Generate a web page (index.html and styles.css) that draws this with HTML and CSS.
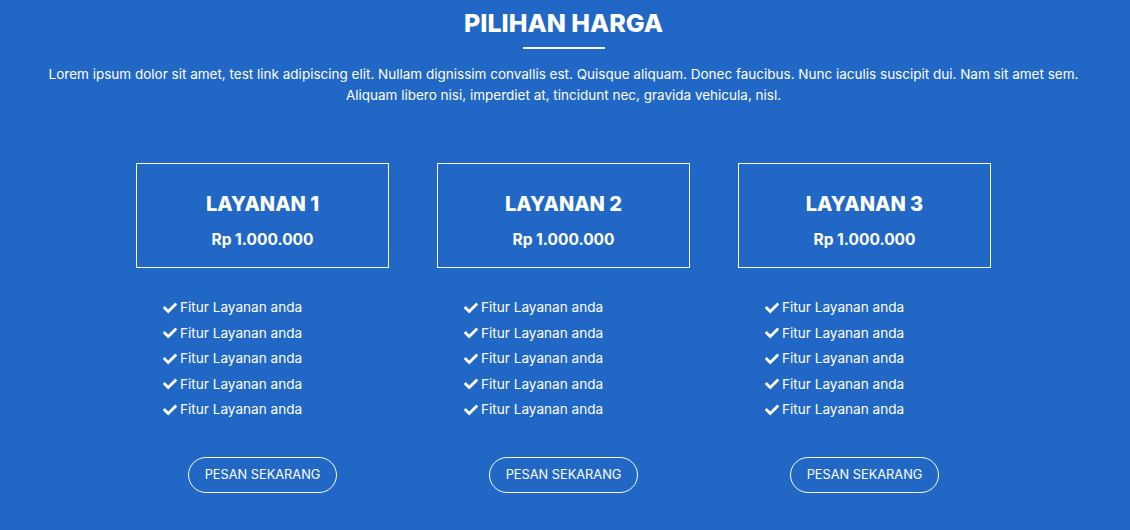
FILE: index.html
```html
<!DOCTYPE html>
<html lang="id">
<head>
<meta charset="utf-8">
<title>Pilihan Harga</title>
<link rel="stylesheet" href="styles.css">
</head>
<body>
<section class="pricing">
  <h2 class="section-title">PILIHAN HARGA</h2>
  <div class="title-line"></div>
  <p class="intro">Lorem ipsum dolor sit amet, test link adipiscing elit. Nullam dignissim convallis est. Quisque aliquam. Donec faucibus. Nunc iaculis suscipit dui. Nam sit amet sem.<br>Aliquam libero nisi, imperdiet at, tincidunt nec, gravida vehicula, nisl.</p>
  <div class="plans">
    <div class="plan">
      <div class="plan-box"><h3>LAYANAN 1</h3><div class="price">Rp 1.000.000</div></div>
      <ul class="features">
        <li><svg class="check" viewBox="0 0 512 512"><path d="M173.9 439.4l-166.4-166.4c-10-10-10-26.2 0-36.2l36.2-36.2c10-10 26.2-10 36.2 0L192 312.7 432.1 72.6c10-10 26.2-10 36.2 0l36.2 36.2c10 10 10 26.2 0 36.2l-294.4 294.4c-10 10-26.2 10-36.2 0z"/></svg>Fitur Layanan anda</li>
        <li><svg class="check" viewBox="0 0 512 512"><path d="M173.9 439.4l-166.4-166.4c-10-10-10-26.2 0-36.2l36.2-36.2c10-10 26.2-10 36.2 0L192 312.7 432.1 72.6c10-10 26.2-10 36.2 0l36.2 36.2c10 10 10 26.2 0 36.2l-294.4 294.4c-10 10-26.2 10-36.2 0z"/></svg>Fitur Layanan anda</li>
        <li><svg class="check" viewBox="0 0 512 512"><path d="M173.9 439.4l-166.4-166.4c-10-10-10-26.2 0-36.2l36.2-36.2c10-10 26.2-10 36.2 0L192 312.7 432.1 72.6c10-10 26.2-10 36.2 0l36.2 36.2c10 10 10 26.2 0 36.2l-294.4 294.4c-10 10-26.2 10-36.2 0z"/></svg>Fitur Layanan anda</li>
        <li><svg class="check" viewBox="0 0 512 512"><path d="M173.9 439.4l-166.4-166.4c-10-10-10-26.2 0-36.2l36.2-36.2c10-10 26.2-10 36.2 0L192 312.7 432.1 72.6c10-10 26.2-10 36.2 0l36.2 36.2c10 10 10 26.2 0 36.2l-294.4 294.4c-10 10-26.2 10-36.2 0z"/></svg>Fitur Layanan anda</li>
        <li><svg class="check" viewBox="0 0 512 512"><path d="M173.9 439.4l-166.4-166.4c-10-10-10-26.2 0-36.2l36.2-36.2c10-10 26.2-10 36.2 0L192 312.7 432.1 72.6c10-10 26.2-10 36.2 0l36.2 36.2c10 10 10 26.2 0 36.2l-294.4 294.4c-10 10-26.2 10-36.2 0z"/></svg>Fitur Layanan anda</li>
      </ul>
      <a class="btn" href="#">PESAN SEKARANG</a>
    </div>
    <div class="plan">
      <div class="plan-box"><h3>LAYANAN 2</h3><div class="price">Rp 1.000.000</div></div>
      <ul class="features">
        <li><svg class="check" viewBox="0 0 512 512"><path d="M173.9 439.4l-166.4-166.4c-10-10-10-26.2 0-36.2l36.2-36.2c10-10 26.2-10 36.2 0L192 312.7 432.1 72.6c10-10 26.2-10 36.2 0l36.2 36.2c10 10 10 26.2 0 36.2l-294.4 294.4c-10 10-26.2 10-36.2 0z"/></svg>Fitur Layanan anda</li>
        <li><svg class="check" viewBox="0 0 512 512"><path d="M173.9 439.4l-166.4-166.4c-10-10-10-26.2 0-36.2l36.2-36.2c10-10 26.2-10 36.2 0L192 312.7 432.1 72.6c10-10 26.2-10 36.2 0l36.2 36.2c10 10 10 26.2 0 36.2l-294.4 294.4c-10 10-26.2 10-36.2 0z"/></svg>Fitur Layanan anda</li>
        <li><svg class="check" viewBox="0 0 512 512"><path d="M173.9 439.4l-166.4-166.4c-10-10-10-26.2 0-36.2l36.2-36.2c10-10 26.2-10 36.2 0L192 312.7 432.1 72.6c10-10 26.2-10 36.2 0l36.2 36.2c10 10 10 26.2 0 36.2l-294.4 294.4c-10 10-26.2 10-36.2 0z"/></svg>Fitur Layanan anda</li>
        <li><svg class="check" viewBox="0 0 512 512"><path d="M173.9 439.4l-166.4-166.4c-10-10-10-26.2 0-36.2l36.2-36.2c10-10 26.2-10 36.2 0L192 312.7 432.1 72.6c10-10 26.2-10 36.2 0l36.2 36.2c10 10 10 26.2 0 36.2l-294.4 294.4c-10 10-26.2 10-36.2 0z"/></svg>Fitur Layanan anda</li>
        <li><svg class="check" viewBox="0 0 512 512"><path d="M173.9 439.4l-166.4-166.4c-10-10-10-26.2 0-36.2l36.2-36.2c10-10 26.2-10 36.2 0L192 312.7 432.1 72.6c10-10 26.2-10 36.2 0l36.2 36.2c10 10 10 26.2 0 36.2l-294.4 294.4c-10 10-26.2 10-36.2 0z"/></svg>Fitur Layanan anda</li>
      </ul>
      <a class="btn" href="#">PESAN SEKARANG</a>
    </div>
    <div class="plan">
      <div class="plan-box"><h3>LAYANAN 3</h3><div class="price">Rp 1.000.000</div></div>
      <ul class="features">
        <li><svg class="check" viewBox="0 0 512 512"><path d="M173.9 439.4l-166.4-166.4c-10-10-10-26.2 0-36.2l36.2-36.2c10-10 26.2-10 36.2 0L192 312.7 432.1 72.6c10-10 26.2-10 36.2 0l36.2 36.2c10 10 10 26.2 0 36.2l-294.4 294.4c-10 10-26.2 10-36.2 0z"/></svg>Fitur Layanan anda</li>
        <li><svg class="check" viewBox="0 0 512 512"><path d="M173.9 439.4l-166.4-166.4c-10-10-10-26.2 0-36.2l36.2-36.2c10-10 26.2-10 36.2 0L192 312.7 432.1 72.6c10-10 26.2-10 36.2 0l36.2 36.2c10 10 10 26.2 0 36.2l-294.4 294.4c-10 10-26.2 10-36.2 0z"/></svg>Fitur Layanan anda</li>
        <li><svg class="check" viewBox="0 0 512 512"><path d="M173.9 439.4l-166.4-166.4c-10-10-10-26.2 0-36.2l36.2-36.2c10-10 26.2-10 36.2 0L192 312.7 432.1 72.6c10-10 26.2-10 36.2 0l36.2 36.2c10 10 10 26.2 0 36.2l-294.4 294.4c-10 10-26.2 10-36.2 0z"/></svg>Fitur Layanan anda</li>
        <li><svg class="check" viewBox="0 0 512 512"><path d="M173.9 439.4l-166.4-166.4c-10-10-10-26.2 0-36.2l36.2-36.2c10-10 26.2-10 36.2 0L192 312.7 432.1 72.6c10-10 26.2-10 36.2 0l36.2 36.2c10 10 10 26.2 0 36.2l-294.4 294.4c-10 10-26.2 10-36.2 0z"/></svg>Fitur Layanan anda</li>
        <li><svg class="check" viewBox="0 0 512 512"><path d="M173.9 439.4l-166.4-166.4c-10-10-10-26.2 0-36.2l36.2-36.2c10-10 26.2-10 36.2 0L192 312.7 432.1 72.6c10-10 26.2-10 36.2 0l36.2 36.2c10 10 10 26.2 0 36.2l-294.4 294.4c-10 10-26.2 10-36.2 0z"/></svg>Fitur Layanan anda</li>
      </ul>
      <a class="btn" href="#">PESAN SEKARANG</a>
    </div>
  </div>
</section>
</body>
</html>
```
FILE: styles.css
```css
html, body {
  margin: 0;
  padding: 0;
  background: #2167c6;
}
body {
  font-family: "Inter", "Noto Sans", sans-serif;
  color: #fff;
  width: 1130px;
  height: 530px;
  overflow: hidden;
}
.pricing {
  display: flex;
  flex-direction: column;
  align-items: center;
  padding: 7px 3px 0 0;
}
.section-title {
  margin: 0;
  font-size: 25px;
  font-weight: 800;
  line-height: 32px;
}
.title-line {
  width: 82px;
  height: 2px;
  background: #fff;
  margin-top: 8px;
}
.intro {
  margin: 15px 0 0;
  font-size: 13.5px;
  line-height: 21px;
  text-align: center;
  width: 1100px;
}
.plans {
  display: grid;
  grid-template-columns: repeat(3, 301px);
  margin-top: 57px;
}
.plan {
  display: flex;
  flex-direction: column;
  align-items: center;
}
.plan-box {
  width: 251px;
  height: 103px;
  border: 1px solid #fff;
  display: flex;
  flex-direction: column;
  align-items: center;
}
.plan-box h3 {
  margin: 28px 0 0;
  font-size: 20px;
  font-weight: 800;
  line-height: 24px;
}
.price {
  margin-top: 14px;
  font-size: 15.5px;
  font-weight: 700;
  line-height: 20px;
}
.features {
  list-style: none;
  margin: 27px 0 0 51px;
  padding: 0;
  align-self: flex-start;
}
.features li {
  display: flex;
  align-items: center;
  font-size: 13.6px;
  line-height: 25.5px;
}
.check {
  width: 14px;
  height: 14px;
  fill: #fff;
  margin-right: 3px;
}
.btn {
  margin-top: 34px;
  width: 147px;
  height: 34px;
  border: 1px solid #fff;
  border-radius: 18px;
  color: #fff;
  text-decoration: none;
  font-size: 12.8px;
  display: flex;
  align-items: center;
  justify-content: center;
}
```
